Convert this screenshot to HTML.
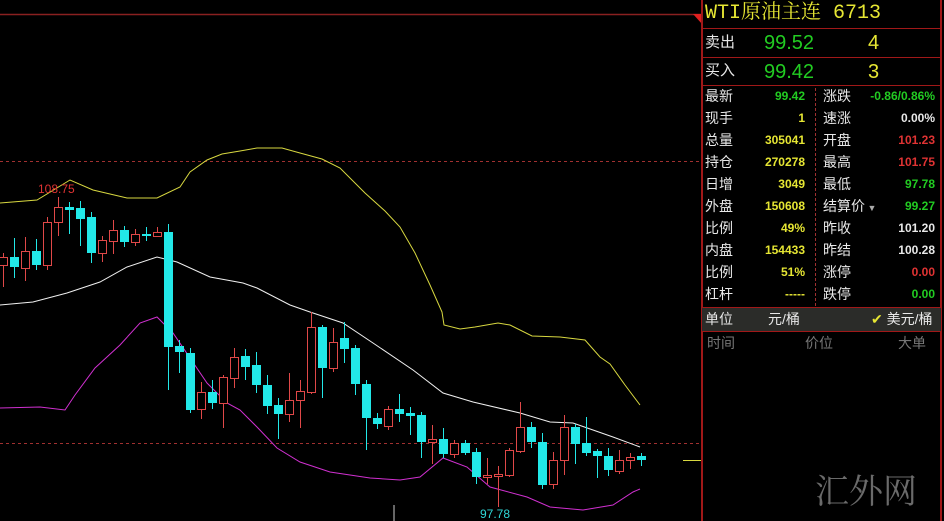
<!DOCTYPE html>
<html><head><meta charset="utf-8"><style>
*{margin:0;padding:0;box-sizing:border-box}
body{width:944px;height:521px;background:#000;overflow:hidden;position:relative;font-family:"Liberation Sans","Noto Sans CJK SC",sans-serif}
.t{position:absolute;white-space:nowrap;line-height:1}
.w{color:#e8e8e8}.g{color:#22cc22}.y{color:#e6e633}.r{color:#e03333}
.s{font-size:14px}
.b{font-weight:bold;font-size:12px}
</style></head><body>
<svg width="944" height="521" style="position:absolute;left:0;top:0">
<line x1="0" y1="14.5" x2="702" y2="14.5" stroke="#8a2020" stroke-width="1.5"/>
<polygon points="693,14 702,14 702,24" fill="#e02020"/>
<line x1="0" y1="161.5" x2="702" y2="161.5" stroke="#a03030" stroke-dasharray="3,3"/>
<line x1="0" y1="443.5" x2="702" y2="443.5" stroke="#a03030" stroke-dasharray="3,3"/>
<polyline fill="none" stroke="#d8d840" points="0,203 37,200 70,180 93,190 127,198 157,198 180,187 190,172 207,160 222,154 240,151 257,148 282,148 300,153 322,159 340,168 365,193 385,211 400,227 415,253 430,285 442,312 444,325 460,329 475,327 498,323 510,325 532,336 560,337 585,340 600,357 610,364 625,385 640,405"/>
<polyline fill="none" stroke="#f0f0f0" points="0,305 33,302 67,293 100,282 127,267 157,257 177,262 210,277 243,283 257,288 290,305 310,312 343,323 373,343 413,370 443,393 473,402 520,413 550,422 573,423 593,430 613,437 640,447"/>
<polyline fill="none" stroke="#d030d0" points="0,408 40,407 65,410 75,395 95,368 120,345 140,323 157,317 173,333 207,383 227,403 240,410 257,427 277,448 300,462 330,472 370,478 400,480 420,477 443,458 467,467 490,487 527,497 550,507 583,510 613,505 633,492 640,489"/>
<line x1="683" y1="460.5" x2="702" y2="460.5" stroke="#d8d840"/>
<line x1="394" y1="505" x2="394" y2="521" stroke="#ccc"/>
<g id="c"></g>
</svg>
<div class="t r" style="left:38px;top:183px;font-size:12px">108.75</div>
<div class="t" style="left:480px;top:508px;font-size:12px;color:#2fd8d8">97.78</div>

<div style="position:absolute;left:701px;top:0;width:2px;height:521px;background:#a01818"></div>
<div style="position:absolute;left:940px;top:0;width:2px;height:521px;background:#a01818"></div>
<div style="position:absolute;left:702px;top:28px;width:239px;height:1px;background:#a01818"></div>
<div style="position:absolute;left:702px;top:57px;width:239px;height:1px;background:#a01818"></div>
<div style="position:absolute;left:702px;top:85px;width:239px;height:1px;background:#a01818"></div>
<div style="position:absolute;left:702px;top:307px;width:239px;height:25px;background:#2b2c29;border-top:1px solid #a01818;border-bottom:1px solid #a01818"></div>
<div style="position:absolute;left:815px;top:88px;height:218px;border-left:1px dashed #a03030"></div>

<div class="t y" style="left:705px;top:4px;font-size:20px;font-family:'Liberation Mono','Noto Serif CJK SC',monospace">WTI原油主连 6713</div>
<div class="t w" style="left:705px;top:35px;font-size:15px">卖出</div>
<div class="t g" style="left:764px;top:33px;font-size:20px">99.52</div>
<div class="t y" style="left:868px;top:33px;font-size:20px">4</div>
<div class="t w" style="left:705px;top:63px;font-size:15px">买入</div>
<div class="t g" style="left:764px;top:62px;font-size:20px">99.42</div>
<div class="t y" style="left:868px;top:62px;font-size:20px">3</div>

<div style="position:absolute;left:705px;top:88px;width:100px">
<div class="t w s" style="top:1px">最新</div><div class="t g b" style="right:0;top:2px">99.42</div>
<div class="t w s" style="top:23px">现手</div><div class="t y b" style="right:0;top:24px">1</div>
<div class="t w s" style="top:45px">总量</div><div class="t y b" style="right:0;top:46px">305041</div>
<div class="t w s" style="top:67px">持仓</div><div class="t y b" style="right:0;top:68px">270278</div>
<div class="t w s" style="top:89px">日增</div><div class="t y b" style="right:0;top:90px">3049</div>
<div class="t w s" style="top:111px">外盘</div><div class="t y b" style="right:0;top:112px">150608</div>
<div class="t w s" style="top:133px">比例</div><div class="t y b" style="right:0;top:134px">49%</div>
<div class="t w s" style="top:155px">内盘</div><div class="t y b" style="right:0;top:156px">154433</div>
<div class="t w s" style="top:177px">比例</div><div class="t y b" style="right:0;top:178px">51%</div>
<div class="t w s" style="top:199px">杠杆</div><div class="t y b" style="right:0;top:200px">-----</div>
</div>
<div style="position:absolute;left:823px;top:88px;width:112px">
<div class="t w s" style="top:1px">涨跌</div><div class="t g b" style="right:0;top:2px">-0.86/0.86%</div>
<div class="t w s" style="top:23px">速涨</div><div class="t w b" style="right:0;top:24px">0.00%</div>
<div class="t w s" style="top:45px">开盘</div><div class="t r b" style="right:0;top:46px">101.23</div>
<div class="t w s" style="top:67px">最高</div><div class="t r b" style="right:0;top:68px">101.75</div>
<div class="t w s" style="top:89px">最低</div><div class="t g b" style="right:0;top:90px">97.78</div>
<div class="t w s" style="top:111px">结算价<span style="font-size:9px;color:#aaa"> ▼</span></div><div class="t g b" style="right:0;top:112px">99.27</div>
<div class="t w s" style="top:133px">昨收</div><div class="t w b" style="right:0;top:134px">101.20</div>
<div class="t w s" style="top:155px">昨结</div><div class="t w b" style="right:0;top:156px">100.28</div>
<div class="t w s" style="top:177px">涨停</div><div class="t r b" style="right:0;top:178px">0.00</div>
<div class="t w s" style="top:199px">跌停</div><div class="t g b" style="right:0;top:200px">0.00</div>
</div>
<div class="t w s" style="left:705px;top:312px">单位</div>
<div class="t w s" style="left:768px;top:312px">元/桶</div>
<div class="t s" style="left:871px;top:312px"><span class="y">✔</span> <span class="w">美元/桶</span></div>
<div class="t s" style="left:707px;top:336px;color:#777">时间</div>
<div class="t s" style="left:805px;top:336px;color:#777">价位</div>
<div class="t s" style="left:898px;top:336px;color:#777">大单</div>
<div class="t" style="left:815px;top:472px;font-size:34px;color:#6a6a6a;font-family:'Noto Serif CJK SC',serif">汇外网</div>

<script>
var C=[[3,257,265,253,287,'r'],[14,257,267,238,278,'c'],[25,251,268,237,281,'r'],[36,251,265,239,270,'c'],[47,222,265,217,270,'r'],[58,207,222,197,236,'r'],[69,207,210,202,234,'c'],[80,208,219,201,246,'c'],[91,217,253,212,263,'c'],[102,240,253,236,262,'r'],[113,230,241,220,254,'r'],[124,230,242,226,247,'c'],[135,234,242,229,246,'r'],[146,234,236,227,241,'c'],[157,232,236,227,237,'r'],[168,232,347,224,390,'c'],[179,346,352,340,373,'c'],[190,353,410,348,413,'c'],[201,392,409,382,419,'r'],[212,392,403,380,409,'c'],[223,377,403,375,428,'r'],[234,357,378,348,388,'r'],[245,356,367,349,380,'c'],[256,365,385,352,393,'c'],[267,385,406,375,414,'c'],[278,405,414,398,439,'c'],[289,400,414,373,422,'r'],[300,391,400,380,428,'r'],[311,327,392,312,394,'r'],[322,327,368,325,398,'c'],[333,342,368,328,372,'r'],[344,338,349,322,363,'c'],[355,348,384,345,395,'c'],[366,384,418,380,450,'c'],[377,418,424,413,429,'c'],[388,409,426,406,430,'r'],[399,409,414,394,422,'c'],[410,413,416,407,435,'c'],[421,415,442,412,458,'c'],[432,439,442,425,464,'r'],[443,439,454,428,458,'c'],[454,443,454,440,458,'r'],[465,443,453,440,455,'c'],[476,452,477,448,484,'c'],[487,475,477,458,484,'r'],[498,474,476,466,507,'r'],[509,450,475,448,477,'r'],[520,427,451,402,453,'r'],[531,427,442,422,448,'c'],[542,442,485,433,489,'c'],[553,460,484,452,489,'r'],[564,427,460,415,475,'r'],[575,427,444,424,464,'c'],[586,443,453,417,456,'c'],[597,451,456,449,478,'c'],[608,456,470,448,476,'c'],[619,460,471,450,474,'r'],[630,457,460,453,469,'r'],[641,456,460,453,466,'c']];
var s='';C.forEach(function(a){var x=a[0],col=a[5]=='r'?'#e04848':'#22e8e8';
s+='<line x1="'+(x+.5)+'" y1="'+a[3]+'" x2="'+(x+.5)+'" y2="'+a[4]+'" stroke="'+col+'"/>';
var h=Math.max(a[2]-a[1],1);
if(a[5]=='r')s+='<rect x="'+(x-3.5)+'" y="'+(a[1]+.5)+'" width="8" height="'+h+'" fill="#000" stroke="'+col+'"/>';
else s+='<rect x="'+(x-4)+'" y="'+a[1]+'" width="9" height="'+Math.max(h,2)+'" fill="'+col+'"/>';});
document.getElementById('c').innerHTML=s;
</script>
</body></html>
